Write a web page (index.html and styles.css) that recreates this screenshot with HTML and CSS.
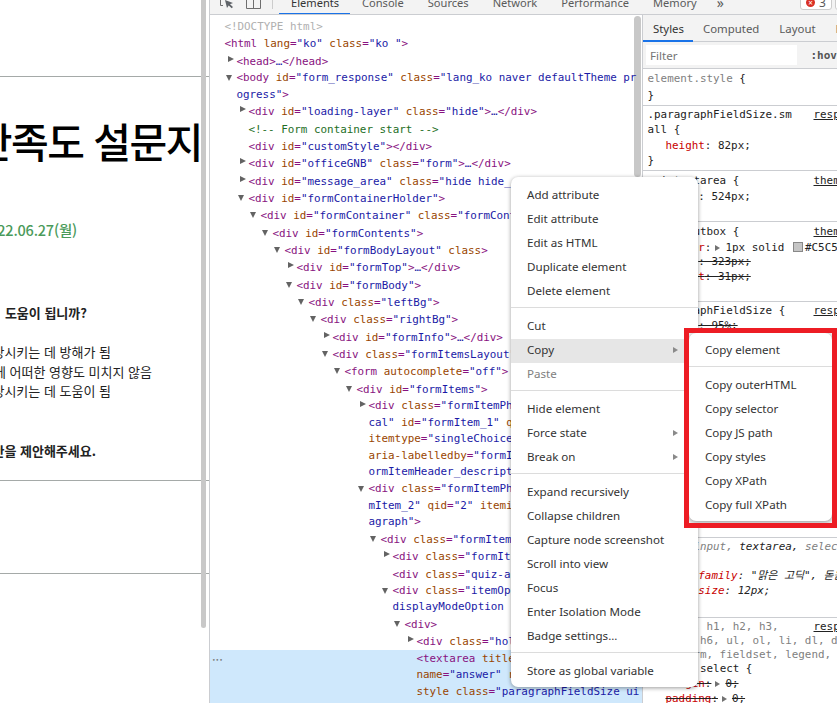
FILE: index.html
```html
<!DOCTYPE html>
<html lang="ko">
<head>
<meta charset="utf-8">
<title>DevTools</title>
<link rel="stylesheet" href="styles.css">
</head>
<body>
<div class="page">
  <div class="rule r1"></div>
  <div class="line title">만족도 설문지</div>
  <div class="line date">2022.06.27(월)</div>
  <div class="line q q1">도움이 됩니까?</div>
  <div class="line opt o1">향상시키는 데 방해가 됨</div>
  <div class="line opt o2">에 어떠한 영향도 미치지 않음</div>
  <div class="line opt o3">향상시키는 데 도움이 됨</div>
  <div class="line q q2">방안을 제안해주세요.</div>
  <div class="rule r2"></div>
  <div class="rule r3"></div>
  <div class="page-scroll"></div>
</div>
<div class="devtools">
  <div class="tabbar">
    <div class="tool-icons">
      <svg width="14" height="9" viewBox="0 0 14 9"><path d="M.5 0v5.500H3" fill="none" stroke="#6e6e6e"/><path d="M5 0l8 3-3 1.300 3 2.700-1.300 1.300L8.700 5.500 7 8z" fill="#5f6368"/></svg>
      <svg width="15" height="9" viewBox="0 0 15 9"><path d="M.5 0v8.500h14V0M7.500 0v8.500" fill="none" stroke="#6e6e6e"/></svg>
    </div>
    <div class="sep"></div>
    <div class="tab active">Elements</div>
    <div class="tab">Console</div>
    <div class="tab">Sources</div>
    <div class="tab">Network</div>
    <div class="tab">Performance</div>
    <div class="tab">Memory</div>
    <div class="tab more">»</div>
    <div class="badge"><span class="err">×</span>3</div>
    <div class="badge next"></div>
  </div>
  <div class="panes">
    <div class="dom">
      <div class="dom-scroll"></div>
      <div class="row i0 dim">&lt;!DOCTYPE html&gt;</div>
      <div class="row i0"><span class="tg">&lt;html</span> <span class="at">lang</span><span class="tg">=</span>"ko" <span class="at">class</span><span class="tg">=</span>"ko "<span class="tg">&gt;</span></div>
      <div class="row i1 c"><span class="tg">&lt;head&gt;</span>…<span class="tg">&lt;/head&gt;</span></div>
      <div class="row w i1 o"><span class="tg">&lt;body</span> <span class="at">id</span><span class="tg">=</span>"form_response" <span class="at">class</span><span class="tg">=</span>"lang_ko naver defaultTheme pr</div>
      <div class="row w i1">ogress"<span class="tg">&gt;</span></div>
      <div class="row i2 c"><span class="tg">&lt;div</span> <span class="at">id</span><span class="tg">=</span>"loading-layer" <span class="at">class</span><span class="tg">=</span>"hide"<span class="tg">&gt;</span>…<span class="tg">&lt;/div&gt;</span></div>
      <div class="row i2 cm">&lt;!-- Form container start --&gt;</div>
      <div class="row i2"><span class="tg">&lt;div</span> <span class="at">id</span><span class="tg">=</span>"customStyle"<span class="tg">&gt;&lt;/div&gt;</span></div>
      <div class="row i2 c"><span class="tg">&lt;div</span> <span class="at">id</span><span class="tg">=</span>"officeGNB" <span class="at">class</span><span class="tg">=</span>"form"<span class="tg">&gt;</span>…<span class="tg">&lt;/div&gt;</span></div>
      <div class="row i2 c"><span class="tg">&lt;div</span> <span class="at">id</span><span class="tg">=</span>"message_area" <span class="at">class</span><span class="tg">=</span>"hide hide_</div>
      <div class="row i2 o"><span class="tg">&lt;div</span> <span class="at">id</span><span class="tg">=</span>"formContainerHolder"<span class="tg">&gt;</span></div>
      <div class="row i3 o"><span class="tg">&lt;div</span> <span class="at">id</span><span class="tg">=</span>"formContainer" <span class="at">class</span><span class="tg">=</span>"formContainer</div>
      <div class="row i4 o"><span class="tg">&lt;div</span> <span class="at">id</span><span class="tg">=</span>"formContents"<span class="tg">&gt;</span></div>
      <div class="row i5 o"><span class="tg">&lt;div</span> <span class="at">id</span><span class="tg">=</span>"formBodyLayout" <span class="at">class</span><span class="tg">&gt;</span></div>
      <div class="row i6 c"><span class="tg">&lt;div</span> <span class="at">id</span><span class="tg">=</span>"formTop"<span class="tg">&gt;</span>…<span class="tg">&lt;/div&gt;</span></div>
      <div class="row i6 o"><span class="tg">&lt;div</span> <span class="at">id</span><span class="tg">=</span>"formBody"<span class="tg">&gt;</span></div>
      <div class="row i7 o"><span class="tg">&lt;div</span> <span class="at">class</span><span class="tg">=</span>"leftBg"<span class="tg">&gt;</span></div>
      <div class="row i8 o"><span class="tg">&lt;div</span> <span class="at">class</span><span class="tg">=</span>"rightBg"<span class="tg">&gt;</span></div>
      <div class="row i9 c"><span class="tg">&lt;div</span> <span class="at">id</span><span class="tg">=</span>"formInfo"<span class="tg">&gt;</span>…<span class="tg">&lt;/div&gt;</span></div>
      <div class="row i9 o"><span class="tg">&lt;div</span> <span class="at">class</span><span class="tg">=</span>"formItemsLayout"</div>
      <div class="row i10 o"><span class="tg">&lt;form</span> <span class="at">autocomplete</span><span class="tg">=</span>"off"<span class="tg">&gt;</span></div>
      <div class="row i11 o"><span class="tg">&lt;div</span> <span class="at">id</span><span class="tg">=</span>"formItems"<span class="tg">&gt;</span></div>
      <div class="row w i12 c"><span class="tg">&lt;div</span> <span class="at">class</span><span class="tg">=</span>"formItemPh</div>
      <div class="row w i12">cal" <span class="at">id</span><span class="tg">=</span>"formItem_1" <span class="at">qid</span></div>
      <div class="row w i12"><span class="at">itemtype</span><span class="tg">=</span>"singleChoice</div>
      <div class="row w i12"><span class="at">aria-labelledby</span><span class="tg">=</span>"formI</div>
      <div class="row w i12">ormItemHeader_descript</div>
      <div class="row w i12 o"><span class="tg">&lt;div</span> <span class="at">class</span><span class="tg">=</span>"formItemPh</div>
      <div class="row w i12">mItem_2" <span class="at">qid</span><span class="tg">=</span>"2" <span class="at">itemi</span></div>
      <div class="row w i12">agraph"<span class="tg">&gt;</span></div>
      <div class="row i13 o"><span class="tg">&lt;div</span> <span class="at">class</span><span class="tg">=</span>"formItem</div>
      <div class="row i14 c"><span class="tg">&lt;div</span> <span class="at">class</span><span class="tg">=</span>"formIt</div>
      <div class="row i14"><span class="tg">&lt;div</span> <span class="at">class</span><span class="tg">=</span>"quiz-a</div>
      <div class="row w i14 o"><span class="tg">&lt;div</span> <span class="at">class</span><span class="tg">=</span>"itemOp</div>
      <div class="row w i14">displayModeOption</div>
      <div class="row i15 o"><span class="tg">&lt;div&gt;</span></div>
      <div class="row i16 c"><span class="tg">&lt;div</span> <span class="at">class</span><span class="tg">=</span>"hol</div>
      <div class="sel">
        <span class="dots">•••</span>
        <div class="row w i16"><span class="tg">&lt;textarea</span> <span class="at">title</span></div>
        <div class="row w i16"><span class="at">name</span><span class="tg">=</span>"answer" <span class="at">r</span></div>
        <div class="row w i16"><span class="at">style</span> <span class="at">class</span><span class="tg">=</span>"paragraphFieldSize ui</div>
      </div>
    </div>
    <div class="side">
      <div class="side-tabs">
        <div class="stab active">Styles</div>
        <div class="stab">Computed</div>
        <div class="stab">Layout</div>
        <div class="stab">Event Listeners</div>
      </div>
      <div class="filter"><div class="filter-box">Filter</div><div class="hov">:hov</div></div>
      <div class="block b1">
        <div class="css"><span class="dimsel">element.style</span> {</div>
        <div class="css end1">}</div>
      </div>
      <div class="block b2">
        <div class="css src">.paragraphFieldSize.sm<u>resp</u></div>
        <div class="css">all {</div>
        <div class="css decl first2"><em>height</em>: 82px;</div>
        <div class="css">}</div>
      </div>
      <div class="block b3">
        <div class="css src">.ui_textarea {<u>them</u></div>
        <div class="css decl first"><em>width</em>: 524px;</div>
        <div class="css">}</div>
      </div>
      <div class="block b4">
        <div class="css src">.ui_inputbox {<u>them</u></div>
        <div class="css decl first"><em>border</em>:<i class="tri"></i>1px solid <i class="swatch"></i>#C5C5C5;</div>
        <div class="css decl"><s><em>width</em>: 323px;</s></div>
        <div class="css decl"><s><em>height</em>: 31px;</s></div>
        <div class="css">}</div>
      </div>
      <div class="block b5">
        <div class="css src">.paragraphFieldSize {<u>resp</u></div>
        <div class="css decl first"><s><em>width</em>: 95%;</s></div>
        <div class="css">}</div>
      </div>
      <div class="block b6">
        <div class="css"><span class="dimsel ital">label, input,</span> <span class="ital">textarea,</span> <span class="dimsel ital">select,</span></div>
        <div class="css dimsel ital">button</div>
        <div class="css decl ital"><em>font-family</em>: "맑은 고딕", 돋움;</div>
        <div class="css decl ital"><em>font-size</em>: 12px;</div>
        <div class="css">}</div>
      </div>
      <div class="block b7">
        <div class="css tight src"><span class="dimsel">address, h1, h2, h3,</span><u>resp</u></div>
        <div class="css tight dimsel">h4, h5, h6, ul, ol, li, dl, dt,</div>
        <div class="css tight dimsel">pre, form, fieldset, legend, i</div>
        <div class="css tight"><span class="dimsel">button,</span> select {</div>
        <div class="css decl first3"><s><em>margin</em>:<i class="tri"></i>0;</s></div>
        <div class="css decl"><s><em>padding</em>:<i class="tri"></i>0;</s></div>
      </div>
    </div>
  </div>
</div>
<div class="menu main">
  <div class="mi">Add attribute</div>
  <div class="mi">Edit attribute</div>
  <div class="mi">Edit as HTML</div>
  <div class="mi">Duplicate element</div>
  <div class="mi">Delete element</div>
  <div class="ms"></div>
  <div class="mi">Cut</div>
  <div class="mi hot arr">Copy</div>
  <div class="mi off">Paste</div>
  <div class="ms"></div>
  <div class="mi">Hide element</div>
  <div class="mi arr">Force state</div>
  <div class="mi arr">Break on</div>
  <div class="ms"></div>
  <div class="mi">Expand recursively</div>
  <div class="mi">Collapse children</div>
  <div class="mi">Capture node screenshot</div>
  <div class="mi">Scroll into view</div>
  <div class="mi">Focus</div>
  <div class="mi">Enter Isolation Mode</div>
  <div class="mi">Badge settings...</div>
  <div class="ms"></div>
  <div class="mi">Store as global variable</div>
</div>
<div class="redbox">
  <div class="menu sub">
    <div class="mi">Copy element</div>
    <div class="ms"></div>
    <div class="mi">Copy outerHTML</div>
    <div class="mi">Copy selector</div>
    <div class="mi">Copy JS path</div>
    <div class="mi">Copy styles</div>
    <div class="mi">Copy XPath</div>
    <div class="mi">Copy full XPath</div>
  </div>
</div>
</body>
</html>
```
FILE: styles.css
```css
* { box-sizing: border-box; }
html, body { margin: 0; height: 100%; overflow: hidden; }
body { display: flex; width: 837px; height: 703px; background: #fff; font-family: "Noto Sans", "Noto Sans CJK KR", sans-serif; position: relative; }

.page { width: 209px; height: 703px; flex: none; position: relative; overflow: hidden; padding-top: 76px; }
.page-scroll { position: absolute; left: 201px; top: 0; width: 5px; height: 628px; background: #c8c8c8; border-radius: 0 0 3px 3px; }
.rule { height: 1px; background: #a5aaa8; }
.line { display: flex; justify-content: flex-end; white-space: nowrap; font-family: "Noto Sans CJK KR", sans-serif; color: #222; }
.title { margin-top: 41px; height: 44px; line-height: 44px; font-size: 41px; font-weight: 500; letter-spacing: -1.5px; color: #000; padding-right: 7px; }
.date { margin-top: 59px; height: 18px; line-height: 18px; font-size: 14.500px; font-weight: 500; color: #4a9a5a; padding-right: 132px; letter-spacing: -.2px; }
.q { font-size: 13px; font-weight: 700; height: 18px; line-height: 18px; }
.q1 { margin-top: 65px; padding-right: 122px; }
.opt { font-size: 13px; height: 19.500px; line-height: 19.500px; }
.o1 { margin-top: 20px; padding-right: 98px; }
.o2 { padding-right: 57px; }
.o3 { padding-right: 98px; }
.q2 { margin-top: 41.500px; padding-right: 113px; }
.r2 { margin-top: 20px; }
.r3 { margin-top: 92px; }

.devtools { flex: none; width: 628px; height: 703px; border-left: 1px solid #cbcdd1; display: flex; flex-direction: column; }
.tabbar { height: 15px; flex: none; background: #f3f3f3; border-bottom: 1px solid #cbcdd1; display: flex; position: relative; overflow: hidden; font-size: 11.100px; color: #5a5a5a; }
.tool-icons { display: flex; gap: 12px; width: 62px; padding-left: 10px; align-items: flex-start; }
.tool-icons svg { display: block; flex: none; }
.sep { width: 1px; height: 9px; background: #ccc; flex: none; }
.tab { height: 15px; line-height: 5px; padding: 0 12px; white-space: nowrap; flex: none; }
.tab.active { border-bottom: 2px solid #1a73e8; width: 71px; margin-left: 6px; color: #333; }
.more { padding: 0 0 0 8px; font-size: 14px; }
.badge { position: absolute; left: 590px; top: -5px; width: 32px; height: 15px; border: 1px solid #ccc; border-radius: 3px; background: #fff; display: flex; align-items: center; gap: 4px; padding-left: 5px; line-height: 1; font-size: 12px; }
.badge.next { left: 625px; }
.err { width: 9px; height: 9px; border-radius: 50%; background: #d93025; color: #fff; font-size: 8px; line-height: 9px; text-align: center; }

.panes { flex: 1; display: flex; min-height: 0; }
.dom { width: 433px; flex: none; position: relative; padding: 3px 0 0 14.400px; overflow: hidden; border-right: 1px solid #cbcdd1; font-family: "DejaVu Sans Mono", monospace; font-size: 10.900px; background: #fff; }
.row { height: 17.350px; line-height: 17px; white-space: nowrap; color: #1a1aa6; position: relative; z-index: 1; }
.row.w { height: 16.600px; line-height: 16.600px; }
.tg { color: #881280; }
.at { color: #994500; }
.row.dim { color: #b0b0b0; }
.row.cm { color: #236e25; }
.i1 { padding-left: 12px; }
.i2 { padding-left: 24px; }
.i3 { padding-left: 36px; }
.i4 { padding-left: 48px; }
.i5 { padding-left: 60px; }
.i6 { padding-left: 72px; }
.i7 { padding-left: 84px; }
.i8 { padding-left: 96px; }
.i9 { padding-left: 108px; }
.i10 { padding-left: 120px; }
.i11 { padding-left: 132px; }
.i12 { padding-left: 144px; }
.i13 { padding-left: 156px; }
.i14 { padding-left: 168px; }
.i15 { padding-left: 180px; }
.i16 { padding-left: 192px; }
.row.c::before, .row.o::before { content: ""; display: inline-block; position: absolute; width: 0; height: 0; }
.row.c::before { margin: 3px 0 0 -8.500px; border-left: 6px solid #636363; border-top: 3.500px solid transparent; border-bottom: 3.500px solid transparent; }
.row.o::before { margin: 5px 0 0 -10px; border-top: 6px solid #636363; border-left: 3.500px solid transparent; border-right: 3.500px solid transparent; }
.sel { background: #cfe8fc; margin: -1px 0 0 -14.400px; padding: 1px 0 10px 14.400px; position: relative; }
.dots { position: absolute; left: 2px; top: 6px; color: #777; font-size: 6px; }
.dom-scroll { position: absolute; left: 424px; top: 1px; width: 7px; height: 161px; background: #c8c8c8; border-radius: 4px; }

.side { flex: 1; min-width: 0; overflow: hidden; font-size: 11.600px; background: #fff; }
.side-tabs { display: flex; height: 27px; background: #f3f3f3; border-bottom: 1px solid #cbcdd1; color: #5a5a5a; white-space: nowrap; font-size: 11.400px; }
.stab { padding: 0 10px; line-height: 27px; height: 27px; flex: none; }
.stab.active { color: #333; border-bottom: 2px solid #1a73e8; width: 50px; }
.filter { display: flex; height: 27px; align-items: center; border-bottom: 1px solid #cbcdd1; background: #f3f3f3; padding-left: 3px; white-space: nowrap; }
.filter-box { width: 157px; height: 20px; background: #fff; line-height: 22px; padding-left: 4px; color: #757575; }
.hov { font-family: "DejaVu Sans Mono", monospace; font-weight: 700; font-size: 11px; color: #555; margin-left: 14px; }
.block { border-bottom: 1px solid #cbcdd1; padding: 2px 0 0 4.500px; }
.b1 { padding-top: 3px; padding-bottom: 1.600px; }
.b2 { padding-bottom: 1.200px; }
.b3 { padding-top: 3px; padding-bottom: 1.900px; }
.b4 { padding-top: 3px; padding-bottom: 1.500px; }
.b5 { height: 236px; }
.b6 { padding-bottom: 3.500px; }
.b7 { border-bottom: 0; }
.css { font-family: "DejaVu Sans Mono", "Noto Sans CJK KR", monospace; font-size: 10.900px; line-height: 14.700px; height: 14.700px; white-space: nowrap; color: #222; position: relative; }
.tight { line-height: 14.100px; height: 14.100px; }
.end1 { margin-top: 2px; }
.dimsel { color: #808080; }
.ital { font-style: italic; }
.src u { position: absolute; left: 166px; top: 0; color: #222; }
.decl { padding-left: 18px; }
.first { margin-top: 1px; }
.first2 { margin-top: 2px; }
.first3 { margin-top: 1px; }
.decl em { font-style: normal; color: #c80000; }
.decl.ital em { font-style: italic; }
.decl s { text-decoration-color: #222; }
.tri { display: inline-block; border-left: 5px solid #727272; border-top: 3.500px solid transparent; border-bottom: 3.500px solid transparent; margin: 0 5px 0 4px; }
.swatch { display: inline-block; width: 10px; height: 10px; background: #c5c5c5; border: 1px solid #888; margin: 0 2px; vertical-align: -1px; }

.menu { background: #fff; font-size: 11.600px; color: #333; border-radius: 7px; box-shadow: 0 1px 4px rgba(0,0,0,.4); white-space: nowrap; }
.main { position: absolute; left: 511px; top: 177px; width: 187px; padding: 7px 0 3px; z-index: 2; }
.mi { height: 24px; line-height: 22px; padding-left: 16px; position: relative; }
.hot { background: #e6e6e6; }
.off { color: #808080; }
.arr::after { content: ""; position: absolute; right: 20px; top: 8px; border-left: 5px solid #8a8a8a; border-top: 3.500px solid transparent; border-bottom: 3.500px solid transparent; }
.ms { height: 1px; background: #dcdcdc; margin: 3px 0 7px; }
.redbox { position: absolute; left: 684px; top: 328px; width: 153px; height: 200px; border: 5px solid #ed1c24; z-index: 3; background: #f2f2f2; overflow: hidden; }
.sub { width: 143px; height: 188px; padding: 6px 0 0; }
```
